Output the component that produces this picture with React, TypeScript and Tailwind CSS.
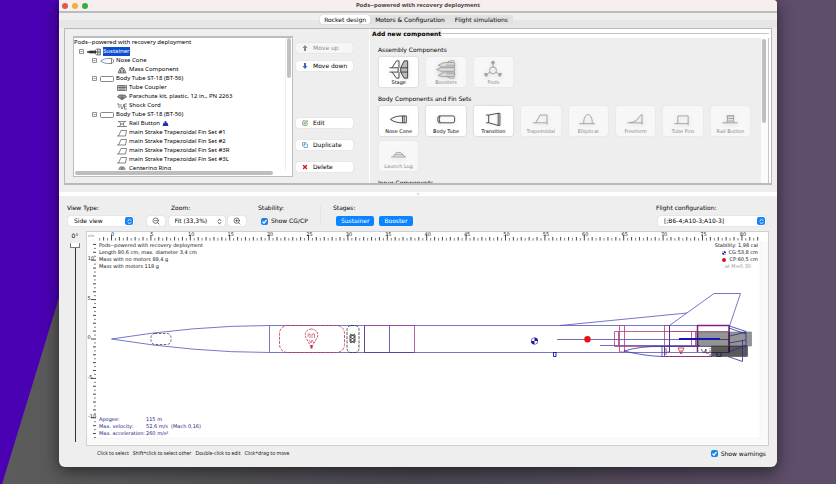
import type { ReactNode } from 'react';
import { ChevronsUpDown, SquarePen, Copy, X, ZoomIn, ZoomOut } from 'lucide-react';

const ui = "font-['DejaVu_Sans',sans-serif]";
const noto = "font-['Noto_Sans',sans-serif]";

type IconKind = 'stage' | 'nose' | 'mass' | 'tube' | 'coupler' | 'chute' | 'cord' | 'button' | 'fin' | 'ring';

const treeShapes: Record<IconKind, ReactNode> = {
  stage: <><path d="M0 5L3 4H9V6H3Z" fill="#333" stroke="#333" /><path d="M8 4L9.500 2H13.500V8H9.500L8 6M10.500 2V8M12 2V8M9 5H13.500" /></>,
  nose: <><path d="M9 2.500C6 2.500 3 3 .5 5C3 7 6 7.500 9 7.500" stroke="#4a62b5" /><path d="M9 2.500H12L13.500 4V6L12 7.500H9M11.500 3V7" /></>,
  mass: <path d="M1 8L3 3.500H7L9 8ZM4 3L5 2L6 3M3.500 5V8M6.500 5V8" fill="#bbb" />,
  tube: <rect x=".5" y="2.500" width="13" height="5" rx="1" />,
  coupler: <path d="M.5 2.500H9.500V7.500H.5ZM3 2.500V7.500M5 2.500V7.500M7 2.500V7.500M.5 4.500H9.500" fill="#ccc" />,
  chute: <path d="M.5 5L2 3H8L9.500 5L7.500 6H2.500ZM2.500 6L5 8L7.500 6M5 3V7" fill="#999" />,
  cord: <path d="M0 3H2V7M4 3V6L5 8L6.500 5V3M10 3H7.500V8H10M7.500 5.500H9.500" />,
  button: <path d="M1 2.500H9M2.500 3L4 5L2.500 7.500M7.500 3L6 5L7.500 7.500M0 7.500H10M3 5H7" />,
  fin: <path d="M0 8H8.500L9.500 2.500H4L1.500 8" />,
  ring: <path d="M1 8L3 3H7L9 8ZM3 5H7M5 3V8M1 6.500H9" fill="#ccc" />,
};

function TreeIcon({ kind }: { kind: IconKind }) {
  const wide = kind === 'stage' || kind === 'nose' || kind === 'tube';
  return (
    <svg viewBox={wide ? '0 0 14 10' : '0 0 10 10'} className={wide ? 'h-[10px] w-[14px]' : 'h-[10px] w-[10px]'} fill="none" stroke="#555" strokeWidth=".7">
      {treeShapes[kind]}
    </svg>
  );
}

const tree: { label: string; icon: IconKind; level: 1 | 2 | 3; mark?: boolean }[] = [
  { label: 'Sustainer', icon: 'stage', level: 1 },
  { label: 'Nose Cone', icon: 'nose', level: 2 },
  { label: 'Mass Component', icon: 'mass', level: 3 },
  { label: 'Body Tube ST-18 (BT-56)', icon: 'tube', level: 2 },
  { label: 'Tube Coupler', icon: 'coupler', level: 3 },
  { label: 'Parachute kit, plastic, 12 in., PN 2263', icon: 'chute', level: 3 },
  { label: 'Shock Cord', icon: 'cord', level: 3 },
  { label: 'Body Tube ST-18 (BT-56)', icon: 'tube', level: 2 },
  { label: 'Rail Button', icon: 'button', level: 3, mark: true },
  { label: 'main Strake Trapezoidal Fin Set #1', icon: 'fin', level: 3 },
  { label: 'main Strake Trapezoidal Fin Set #2', icon: 'fin', level: 3 },
  { label: 'main Strake Trapezoidal Fin Set #3R', icon: 'fin', level: 3 },
  { label: 'main Strake Trapezoidal Fin Set #3L', icon: 'fin', level: 3 },
  { label: 'Centering Ring', icon: 'ring', level: 3 },
];

const indent = { 1: 'pl-[5px]', 2: 'pl-[18px]', 3: 'pl-[43px]' };

function ComponentTree() {
  return (
    <div className={`flex h-[141px] w-[220px] flex-col border border-t-2 border-[#bdbdbd] bg-white text-[6px] leading-[9px] text-black ${noto}`}>
      <div className="flex min-h-0 flex-1">
        <ul className="min-w-0 flex-1 overflow-hidden">
          <li className="h-[9px] whitespace-nowrap">Pods--powered with recovery deployment</li>
          {tree.map((n, i) => (
            <li key={i} className={`flex h-[9px] items-center gap-[2px] whitespace-nowrap ${indent[n.level]}`}>
              {n.level < 3 && (
                <svg viewBox="0 0 5 5" className="mr-px h-[5px] w-[5px] shrink-0" fill="none" stroke="#777">
                  <path d="M.5 .5H4.500V4.500H.5ZM1.500 2.500H3.500" strokeWidth=".8" />
                </svg>
              )}
              <TreeIcon kind={n.icon} />
              {n.level === 1 ? <span className="bg-[#0b4fd0] text-white">{n.label}</span> : <span>{n.label}</span>}
              {n.mark && (
                <svg viewBox="0 0 7 6" className="h-[5px] w-[7px]" fill="#2b2bb0"><path d="M0 6L1 2H2.500V0H4.500V2H6L7 6Z" /></svg>
              )}
            </li>
          ))}
        </ul>
        <div className="w-[7px] border-l border-[#eee] px-px">
          <div className="h-[40px] w-[4px] rounded-full bg-[#c1c1c1]" />
        </div>
      </div>
      <div className="h-[6px] px-px pt-px">
        <div className="h-[4px] w-11/12 rounded-full bg-[#bdbdbd]" />
      </div>
    </div>
  );
}

function Arrow({ up }: { up?: boolean }) {
  return (
    <svg viewBox="0 0 6 6" className="h-[6px] w-[6px]" fill={up ? '#888' : '#4763b5'}>
      <path d={up ? 'M3 0L5.500 3H4V6H2V3H.5Z' : 'M3 6L5.500 3H4V0H2V3H.5Z'} />
    </svg>
  );
}

function SideButton({ icon, children, disabled }: { icon: ReactNode; children: ReactNode; disabled?: boolean }) {
  return (
    <button disabled={disabled} className="flex h-[10px] w-[57px] items-center gap-[5px] rounded-xs bg-white pl-[6px] shadow-[0_0_1px_#bbb] disabled:bg-[#f6f6f6] disabled:text-[#8c8c8c]">
      {icon}
      {children}
    </button>
  );
}

const cardArt: Record<string, ReactNode> = {
  Stage: <><path d="M1 9H11V14H1M4 9L9 1H12V9M4 14L9 21H12V14" /><path d="M14 9L18 1H22V21H18L14 14ZM14 9H22M14 14H22" fill="#bbb" /></>,
  Boosters: <><path d="M3 6L10 3H22V8H7ZM3 18L10 14H22V19H7ZM1 11L6 9H22V13H6Z" fill="#ddd" /><path d="M13 3L17 1H22M13 19L17 21H22M12 6H22M12 16H22" /></>,
  Pods: <><circle cx="12" cy="12" r="4" /><path d="M12 8V1M10 3H14M8.500 14L3 18M2 15L5 19M15.500 14L21 18M22 15L19 19" /><circle cx="12" cy="3" r="1.500" fill="#aaa" /><circle cx="4" cy="17" r="1.500" fill="#aaa" /><circle cx="20" cy="17" r="1.500" fill="#aaa" /></>,
  'Nose Cone': <path d="M2 12C6 9 11 8 16 8V16C11 16 6 15 2 12ZM16 8H20.500V16H16M18 8V16" />,
  'Body Tube': <path d="M4 8H20Q22 8 22 10V14Q22 16 20 16H4Q2.500 16 2.500 12Q2.500 8 4 8ZM5 8Q3.500 12 5 16" />,
  Transition: <path d="M4 7H7L18 5H20V19H18L7 16H4M7 7V16M18 5V19" />,
  Trapezoidal: <path d="M3 16H19M6 16L11 7H19V18" />,
  Elliptical: <path d="M2 17H20M7 17C7 3 17 3 17 17" />,
  Freeform: <path d="M2 16H20M5 16Q14 14 15 10L19 6V18" />,
  'Tube Fins': <path d="M2 17H18M6 17V8H18V19" />,
  'Rail Button': <path d="M3 16H21M8 16L9 14H16L17 16M9 14V8H16V14M8 8H17M9 11H16" />,
  'Launch Lug': <path d="M3 15H20M5 15L9 10H14L19 15M7 12.500H17" />,
};

function Card({ label, enabled }: { label: string; enabled?: boolean }) {
  return (
    <button
      disabled={!enabled}
      className="flex h-[30px] flex-col items-center justify-end rounded-xs bg-white pb-px text-[5px] leading-[7px] text-black shadow-[0_0_2px_#bbb] disabled:bg-[#f7f7f7] disabled:text-[#8a8a8a] disabled:shadow-[0_0_1px_#ccc]"
    >
      <svg viewBox="0 0 24 22" className={enabled ? 'h-[19px] w-[24px] text-[#333] drop-shadow-sm' : 'h-[19px] w-[24px] text-[#999] drop-shadow-sm'} fill="none" stroke="currentColor" strokeWidth="1">
        {cardArt[label]}
      </svg>
      {label}
    </button>
  );
}

function CardGrid({ title, items }: { title: string; items: [string, boolean][] }) {
  return (
    <section>
      <h3 className="mb-[3px] h-[9px] leading-[9px]">{title}</h3>
      <div className="grid grid-cols-8 gap-x-2 gap-y-[5px] pl-px">
        {items.map(([label, on]) => <Card key={label} label={label} enabled={on} />)}
      </div>
    </section>
  );
}

function AddComponent() {
  return (
    <div className="flex min-w-0 flex-1 flex-col border-l border-white bg-white pr-[2px] text-[6px]">
      <div className="flex h-[9px] items-center">
        <h2 className="bg-[#eee] pl-[2px] pr-px font-bold leading-[9px]">Add new component</h2>
        <div className="h-px flex-1 bg-[#c5c5c5]" />
      </div>
      <div className="flex min-h-0 flex-1 border-r border-[#c5c5c5]">
        <div className="flex min-w-0 flex-1 flex-col gap-[7px] overflow-hidden bg-[#eee] pl-2 pr-[11px] pt-[7px]">
          <CardGrid title="Assembly Components" items={[['Stage', true], ['Boosters', false], ['Pods', false]]} />
          <CardGrid
            title="Body Components and Fin Sets"
            items={[['Nose Cone', true], ['Body Tube', true], ['Transition', true], ['Trapezoidal', false], ['Elliptical', false], ['Freeform', false], ['Tube Fins', false], ['Rail Button', false], ['Launch Lug', false]]}
          />
          <CardGrid title="Inner Components" items={[]} />
        </div>
        <div className="w-[7px] bg-[#fbfbfb] pl-px pt-px">
          <div className="h-[84px] w-[4px] rounded-full bg-[#bfbfbf]" />
        </div>
      </div>
    </div>
  );
}

function Picker({ id, value, blue, className }: { id: string; value: string; blue?: boolean; className: string }) {
  return (
    <div className={`relative flex h-[10px] items-center rounded-xs bg-white shadow-[0_0_1px_#aaa] ${className}`}>
      <select id={id} className="h-full w-full appearance-none pl-[6px] leading-[10px] outline-none">
        <option>{value}</option>
      </select>
      <span className={`pointer-events-none absolute right-px flex h-[8px] w-[8px] items-center justify-center rounded-xs ${blue ? 'bg-[#1683f7] text-white' : 'text-[#333]'}`}>
        <ChevronsUpDown size={7} strokeWidth={3} />
      </span>
    </div>
  );
}

function Check({ id, label }: { id: string; label: string }) {
  return (
    <label htmlFor={id} className="flex h-[10px] items-center gap-[3px]">
      <span className="relative flex h-[7px] w-[7px]">
        <input id={id} type="checkbox" defaultChecked className="h-[7px] w-[7px] appearance-none rounded-xs bg-[#1683e8]" />
        <svg viewBox="0 0 7 7" className="pointer-events-none absolute inset-0" fill="none" stroke="#fff" strokeWidth="1.200"><path d="M1.500 3.500L3 5.200L5.500 1.800" /></svg>
      </span>
      {label}
    </label>
  );
}

const iconButton = 'flex h-[10px] w-[18px] items-center justify-center rounded-xs bg-white text-[#334] shadow-[0_0_1px_#aaa]';
const stageButton = 'h-[10px] rounded-[2px] bg-[#0a84ff] px-[5px] leading-[10px] text-white';

function Toolbar() {
  return (
    <div className={`flex h-[35px] items-start pl-2 pr-[11px] pt-[8px] text-[6px] leading-[8px] ${ui}`}>
      <div className="flex w-[80px] flex-col gap-[4px]">
        <label htmlFor="view">View Type:</label>
        <Picker id="view" value="Side view" blue className="ml-px w-[66px]" />
      </div>
      <div className="flex w-[111px] flex-col gap-[4px]">
        <label htmlFor="zoom" className="pl-[24px]">Zoom:</label>
        <div className="flex justify-between pr-[12px]">
          <button aria-label="Zoom out" className={iconButton}><ZoomOut size={8} strokeWidth={2} /></button>
          <Picker id="zoom" value="Fit (33,3%)" className="w-[56px]" />
          <button aria-label="Zoom in" className={iconButton}><ZoomIn size={8} strokeWidth={2} /></button>
        </div>
      </div>
      <div className="flex w-[63px] flex-col gap-[4px] border-r border-[#e6e6e6]">
        <p>Stability:</p>
        <div className="pl-[3px]"><Check id="cgcp" label="Show CG/CP" /></div>
      </div>
      <div className="flex flex-1 flex-col gap-[4px] pl-[12px]">
        <p>Stages:</p>
        <div className="flex gap-[5px] pl-[3px]">
          <button className={stageButton}>Sustainer</button>
          <button className={stageButton}>Booster</button>
        </div>
      </div>
      <div className="flex w-[110px] flex-col gap-[4px]">
        <label htmlFor="config">Flight configuration:</label>
        <Picker id="config" value="[;B6-4;A10-3;A10-3]" blue className="ml-[2px]" />
      </div>
    </div>
  );
}

const cm = 7.88;
const originX = 111.5;
const originY = 339;
const ticksX = Array.from({ length: 168 }, (_, i) => i - 3);
const ticksY = Array.from({ length: 50 }, (_, i) => i - 24);

function Rulers() {
  return (
    <g stroke="#333" fill="#222">
      {ticksX.map((k) => {
        const x = originX + (k * cm) / 2;
        const top = k % 10 === 0 ? 235 : k % 2 === 0 ? 237 : 238;
        return <path key={`x${k}`} d={`M${x} ${top}V240.500`} strokeWidth={k % 2 === 0 ? 0.9 : 0.6} />;
      })}
      {ticksY.map((k) => {
        const y = originY + (k * cm) / 2;
        const left = k % 10 === 0 ? 91 : k % 2 === 0 ? 93 : 94;
        return <path key={`y${k}`} d={`M${left} ${y}H96`} strokeWidth={k % 2 === 0 ? 0.9 : 0.6} />;
      })}
      <g stroke="none" fontSize="5" fontFamily="DejaVu Sans, sans-serif" textAnchor="middle">
        {Array.from({ length: 17 }, (_, i) => (
          <text key={i} x={originX + i * 5 * cm + 1} y="236">{i * 5}</text>
        ))}
        <text x="91" y="260">10</text>
        <text x="89" y="300">5</text>
        <text x="89" y="339">0</text>
        <text x="90" y="379">-5</text>
        <text x="92" y="418">-10</text>
        <text x="91" y="237" fontSize="4" fill="#777">cm</text>
      </g>
    </g>
  );
}

function Rocket() {
  return (
    <g fill="none" strokeWidth=".8" stroke="#5454b8">
      <path d="M111.500 339Q195 325.500 269.500 325.500H729.500V352.500H269.500Q195 352.500 111.500 339ZM269.500 325.500V352.500" />
      <rect x="151" y="333.500" width="20" height="11" rx="4" stroke="#444" strokeDasharray="2.500 1.500" />
      <g stroke="#c03050">
        <rect x="279.500" y="325.500" width="65" height="27" rx="8" strokeDasharray="3 1.200" />
        <path d="M311.500 329Q304 330 305.500 337L311.500 347.500L317.500 337Q319 330 311.500 329Z" strokeDasharray="2.500 1" />
        <path d="M308 337V334H310V338M312 338V334H314.500V338M309 340L311 343L312 340L314 343" strokeWidth=".6" />
        <path d="M311.500 345V348.500" strokeWidth="2" />
      </g>
      <g stroke="#333">
        <rect x="347" y="325.500" width="12" height="27" rx="4" strokeDasharray="3 1.200" />
        <path d="M350 334L355 337L350 340L355 343M355 334L350 337L355 340L350 343M350 335H355V342H350Z" />
      </g>
      <path d="M364.500 325.500H414.500V352.500H364.500Z" stroke="#a04090" />
      <path d="M364.500 325.500V352.500M389.500 325.500V352.500M364.500 352.500H414" stroke="#4b3fa5" />
      <path d="M560 325.500L687 313M669.500 325.500L714 293.500H740.500L729.500 326" />
      <path d="M553 352.500H556.500M553.500 352.500V356.500H556V352.500" stroke="#2222a0" strokeWidth="1" />
      <path d="M557 339.500H729M600 345.500H700" stroke="#4a4aa8" />
      <g stroke="#b03a80">
        <path d="M614.500 331.500H729M614.500 331.500V346.500H697M618.500 331.500V346.500M619.500 325.500H624.500V352H619.500ZM664.500 325.500H669.500V352H664.500ZM671.500 331.500H697V346.500M691.500 331.500V346.500M695.500 331.500V346.500" />
        <path d="M697.500 325.500V352M729 325.500V352M697 325.500H729" strokeWidth="1.500" stroke="#802080" />
      </g>
      <path d="M624 351Q640 346 662 346.500H712M624 351Q645 356 662 356.500H712M662 346V356.500M664.500 346V356.500" stroke="#3535a0" />
      <path d="M666 348V356.500H710V348" stroke="#b02030" strokeDasharray="3 1" />
      <path d="M678 348L681 354L684 348ZM681 350V354" stroke="#d02030" />
      <path d="M701 349L704 353L706 349V353L709 353" stroke="#333" />
      <rect x="697" y="332" width="54.500" height="14" fill="#000" fillOpacity=".42" stroke="#666" strokeWidth=".5" />
      <rect x="711.500" y="346" width="36" height="10.500" fill="#000" fillOpacity=".65" stroke="#333" strokeWidth=".5" />
      <path d="M729.500 326L746 331.500V346M729 328L746 334M730 336L746 332M729 352L746 345M729 343L746 340M728 356.500L742.500 361.500V340M669.500 325.500V352" stroke="#2b2b98" />
      <path d="M679 339H720" stroke="#1616b8" strokeWidth="2" />
      <path d="M717 353V356.500H721V353" stroke="#111160" />
      <g stroke="none">
        <circle cx="534.500" cy="341" r="3.500" fill="#1a1a9a" />
        <path d="M534.500 341V338A3 3 0 0 0 531.500 341ZM534.500 341V344A3 3 0 0 0 537.500 341Z" fill="#fff" />
        <circle cx="587.500" cy="339.200" r="3.200" fill="#e0101c" />
      </g>
    </g>
  );
}

const results = [
  ['Apogee:', '115 m'],
  ['Max. velocity:', '52,6 m/s  (Mach 0,16)'],
  ['Max. acceleration:', '260 m/s²'],
];

function Canvas() {
  return (
    <div className={`relative min-w-0 flex-1 border border-[#cfcfcf] bg-[#fafafa] text-[5px] leading-[7px] ${ui}`}>
      <svg viewBox="87 232 681 213" className="block w-full overflow-visible" role="img" aria-label="Rocket side view">
        <rect x="87" y="232" width="681" height="9" fill="#fff" />
        <rect x="87" y="241" width="673" height="197" fill="#fff" stroke="#eee" strokeWidth=".5" />
        <Rulers />
        <Rocket />
      </svg>
      <div className="absolute left-[12px] top-[10px] text-[#111]">
        <p>Pods--powered with recovery deployment</p>
        <p>Length 80,6 cm, max. diameter 3,4 cm</p>
        <p>Mass with no motors 89,4 g</p>
        <p>Mass with motors 118 g</p>
      </div>
      <div className="absolute right-[10px] top-[10px] text-right text-[#111]">
        <p>Stability: 1,98 cal</p>
        <p className="flex items-center justify-end gap-[3px]">
          <svg viewBox="0 0 4 4" className="h-[4px] w-[4px]"><circle cx="2" cy="2" r="2" fill="#22a" /><path d="M2 2V0A2 2 0 0 0 0 2ZM2 2V4A2 2 0 0 0 4 2Z" fill="#dde" /></svg>
          CG:53,8 cm
        </p>
        <p className="flex items-center justify-end gap-[3px]">
          <span className="h-[4px] w-[4px] rounded-full bg-[#d8101c]" />
          CP:60,5 cm
        </p>
        <p className="pr-[7px] text-[#999]">at M=0,30</p>
      </div>
      <table className="absolute bottom-[8px] left-[12px] text-[#1c1c80]">
        <tbody>
          {results.map(([name, value]) => (
            <tr key={name}>
              <th scope="row" className="w-[47px] whitespace-nowrap p-0 text-left font-normal">{name}</th>
              <td className="whitespace-pre p-0">{value}</td>
            </tr>
          ))}
        </tbody>
      </table>
    </div>
  );
}

const tabs = ['Rocket design', 'Motors & Configuration', 'Flight simulations'];

export default function App() {
  return (
    <div className="relative min-h-screen overflow-hidden bg-linear-to-r from-[#5c5c5c] via-[#4b4751] to-[#5d4d68] text-black">
      <svg viewBox="0 0 836 484" preserveAspectRatio="none" className="absolute inset-0 h-full w-full">
        <path d="M0 0H150L2 484H0Z" fill="#4a00b3" />
        <path d="M777 0H836V484H777Z" fill="#5e4d6b" />
      </svg>
      <main className={`relative mx-[59px] rounded-b-[6px] rounded-tr-[4px] bg-[#eee] shadow-[0_4px_16px_rgba(0,0,0,0.55)] ${ui}`}>
        <header className="flex h-[11px] items-center rounded-tr-[4px] bg-[#f6efee] px-[3px]">
          <div className="flex w-[60px] gap-[4px]">
            <span className="h-[6px] w-[6px] rounded-full bg-[#e0584f]" />
            <span className="h-[6px] w-[6px] rounded-full bg-[#edb13c]" />
            <span className="h-[6px] w-[6px] rounded-full bg-[#35ae45]" />
          </div>
          <h1 className={`flex-1 pr-[60px] text-center text-[6px] font-bold leading-[9px] text-[#4a4444] ${noto}`}>Pods--powered with recovery deployment</h1>
        </header>
        <div className="h-[2px] bg-[#bcbcbc]" />
        <nav className="flex h-[15px] items-start justify-center bg-linear-to-b from-[#efefef] from-45% to-[#e6e6e6] to-45% pr-[3px] pt-[2px] text-[6px]">
          <div className="flex rounded-xs bg-[#e1e1e1]">
            {tabs.map((t, i) => (
              <button key={t} className={`h-[9px] rounded-xs leading-[9px] ${i === 0 ? 'bg-white px-[4px] shadow-[0_0_1px_#999]' : 'px-[5px]'}`}>{t}</button>
            ))}
          </div>
        </nav>

        <div className="mx-[5px] flex h-[157px] border border-b-2 border-[#b9b9b9] bg-[#eee]">
          <div className="pl-[8px] pt-[7px]"><ComponentTree /></div>
          <div className="flex w-[76px] flex-col pl-[3px] pt-[14px] text-[6px] leading-[10px]">
            <SideButton disabled icon={<Arrow up />}>Move up</SideButton>
            <div className="h-[8px]" />
            <SideButton icon={<Arrow />}>Move down</SideButton>
            <div className="h-[47px]" />
            <div className="flex flex-col gap-[12px]">
              <SideButton icon={<SquarePen size={6} strokeWidth={3} color="#4b8f4b" />}>Edit</SideButton>
              <SideButton icon={<Copy size={6} strokeWidth={3} color="#3f8fca" />}>Duplicate</SideButton>
              <SideButton icon={<X size={6} strokeWidth={6} color="#cf2030" />}>Delete</SideButton>
            </div>
          </div>
          <AddComponent />
        </div>

        <div className="mt-[7px] flex h-[4px] items-center justify-center bg-white">
          <span className="h-[2px] w-[2px] rounded-full bg-[#ccc]" />
        </div>

        <Toolbar />

        <div className="flex pl-[5px] pr-2">
          <div className="flex w-[22px] flex-col items-center text-[6px] leading-[8px]">
            <label htmlFor="angle" className="pt-px">0°</label>
            <div className="relative flex min-h-0 w-[10px] flex-1 flex-col items-center pb-1 pt-[3px]">
              <span className="h-[5px] w-[10px] rounded-[1px] border border-t-0 border-[#777] bg-white" />
              <span className="w-px flex-1 bg-[#333]" />
              <input id="angle" type="range" min="0" max="360" defaultValue="0" className="absolute inset-0 h-full w-full opacity-0" />
            </div>
          </div>
          <Canvas />
        </div>

        <footer className="flex h-[21px] items-start justify-between pl-[38px] pr-[11px] pt-[2px] text-[6px]">
          <p className={`flex gap-[4px] text-[5px] leading-[10px] text-[#222] ${noto}`}>
            <span>Click to select</span>
            <span>Shift+click to select other</span>
            <span>Double-click to edit</span>
            <span>Click+drag to move</span>
          </p>
          <Check id="warnings" label="Show warnings" />
        </footer>
      </main>
    </div>
  );
}
